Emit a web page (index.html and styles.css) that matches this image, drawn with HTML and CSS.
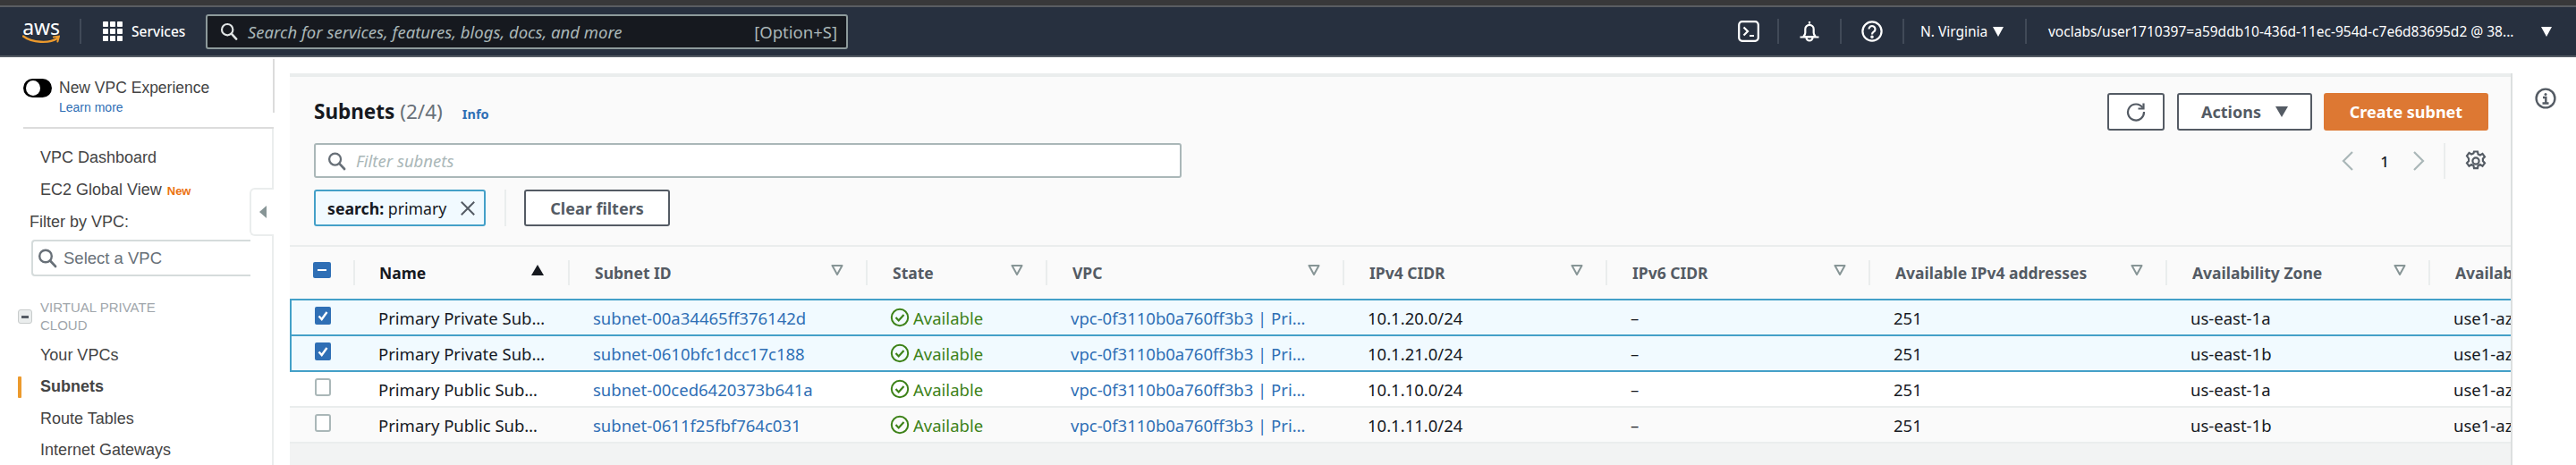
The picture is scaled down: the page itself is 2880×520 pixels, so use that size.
FILE: index.html
```html
<!DOCTYPE html>
<html lang="en">
<head>
<meta charset="utf-8">
<title>Subnets | VPC Console</title>
<link rel="stylesheet" href="styles.css">
</head>
<body>
<svg class="defs" width="0" height="0" aria-hidden="true">
  <symbol id="funnel" viewBox="0 0 14 12"><path d="M1.500 1h11L7 11z" fill="none" stroke="#879596" stroke-width="2" stroke-linejoin="round"/></symbol>
  <symbol id="ok" viewBox="0 0 22 22"><circle cx="11" cy="11" r="9.200" fill="none" stroke="#3d8218" stroke-width="2"/><path d="M6.500 11l3.200 3.400 5.800-6.400" fill="none" stroke="#3d8218" stroke-width="2.200"/></symbol>
  <symbol id="tick" viewBox="0 0 18 20"><rect width="18" height="20" rx="2" fill="#2f6fb5"/><path d="M4.500 10.500l3.200 3.500 5.800-8" fill="none" stroke="#fff" stroke-width="2.400"/></symbol>
  <symbol id="lens" viewBox="0 0 22 22"><circle cx="9" cy="9" r="6.800" fill="none" stroke="currentColor" stroke-width="2.400"/><path d="M14 14l6 6.400" stroke="currentColor" stroke-width="2.800" stroke-linecap="round"/></symbol>
</svg>

<div class="os-strip"></div>
<header class="nav">
  <div class="aws-logo">
    <span class="aws-word">aws</span>
    <svg class="aws-smile" viewBox="0 0 42 11"><path d="M1 1.500C11 9 30 10 39 4" fill="none" stroke="#ec9a2d" stroke-width="2.400" stroke-linecap="round"/><path d="M35 2.600l6-1-1.600 6" fill="none" stroke="#ec9a2d" stroke-width="2" stroke-linecap="round"/></svg>
  </div>
  <span class="nav-sep sep-logo"></span>
  <svg class="grid-icon" viewBox="0 0 22 22" fill="#fff"><rect width="6" height="6" rx=".8"/><rect x="8" width="6" height="6" rx=".8"/><rect x="16" width="6" height="6" rx=".8"/><rect y="8" width="6" height="6" rx=".8"/><rect x="8" y="8" width="6" height="6" rx=".8"/><rect x="16" y="8" width="6" height="6" rx=".8"/><rect y="16" width="6" height="6" rx=".8"/><rect x="8" y="16" width="6" height="6" rx=".8"/><rect x="16" y="16" width="6" height="6" rx=".8"/></svg>
  <span class="nav-services">Services</span>
  <div class="nav-search">
    <svg class="nav-lens"><use href="#lens"/></svg>
    <span class="nav-placeholder">Search for services, features, blogs, docs, and more</span>
    <span class="nav-shortcut">[Option+S]</span>
  </div>
  <svg class="nav-icon icon-term" viewBox="0 0 24 24" fill="none" stroke="#fff" stroke-width="2.200"><rect x="1.200" y="1.200" width="21.600" height="21.600" rx="3.500"/><path d="M6.500 7.500l4.500 4.500-4.500 4.500M13 17h5"/></svg>
  <span class="nav-sep sep-a"></span>
  <svg class="nav-icon icon-bell" viewBox="0 0 24 24" fill="none" stroke="#fff" stroke-width="2.200"><path d="M12 1v2.500M5.500 18c0-1 1.800-2 1.800-4.500V9.500a4.700 4.700 0 0 1 9.400 0v4c0 2.500 1.800 3.500 1.800 4.500z"/><path d="M1.500 18.500h21M8.500 19a3.500 3.500 0 0 0 7 0"/></svg>
  <span class="nav-sep sep-b"></span>
  <svg class="nav-icon icon-help" viewBox="0 0 24 24" fill="none" stroke="#fff" stroke-width="2.200"><circle cx="12" cy="12" r="10.600"/><path d="M8.500 9.500a3.500 3.500 0 1 1 5.500 2.900c-1.300.9-2 1.400-2 3"/><circle cx="12" cy="18.300" r=".7" fill="#fff"/></svg>
  <span class="nav-sep sep-c"></span>
  <span class="nav-region">N. Virginia</span>
  <span class="caret-white caret-region"></span>
  <span class="nav-sep sep-d"></span>
  <span class="nav-user">voclabs/user1710397=a59ddb10-436d-11ec-954d-c7e6d83695d2 @ 38...</span>
  <span class="caret-white caret-user"></span>
</header>

<div class="shell">
  <aside class="sidebar">
    <div class="exp">
      <div class="exp-row"><span class="toggle"><span class="toggle-knob"></span></span><span class="exp-title">New VPC Experience</span></div>
      <a class="exp-link">Learn more</a>
    </div>
    <nav class="side-nav">
      <a class="side-item">VPC Dashboard</a>
      <a class="side-item">EC2 Global View <span class="new-tag">New</span></a>
      <div class="filter-label">Filter by VPC:</div>
      <div class="vpc-select">
        <svg class="vpc-lens"><use href="#lens"/></svg>
        <span>Select a VPC</span>
      </div>
      <div class="group-head">
        <span class="minus-box"></span>
        <span class="group-title">VIRTUAL PRIVATE<br>CLOUD</span>
      </div>
      <a class="side-item tight">Your VPCs</a>
      <a class="side-item tight active">Subnets</a>
      <a class="side-item tight">Route Tables</a>
      <a class="side-item tight">Internet Gateways</a>
    </nav>
    <div class="collapse-tab"><span class="collapse-caret"></span></div>
  </aside>

  <main class="content">
    <section class="panel">
      <div class="title-row">
        <h1 class="title">Subnets <span class="count">(2/4)</span></h1>
        <a class="info">Info</a>
        <div class="actions">
          <button class="btn btn-refresh"><svg viewBox="0 0 22 22" width="22" height="22" fill="none" stroke="#545b64" stroke-width="2.200"><path d="M18.500 6.500A9 9 0 1 0 20 11"/><path d="M19.500 1.500v6h-6"/></svg></button>
          <button class="btn btn-actions">Actions<span class="caret-gray"></span></button>
          <button class="btn btn-primary">Create subnet</button>
        </div>
      </div>
      <div class="filter-row">
        <div class="filter-input">
          <svg class="filter-lens"><use href="#lens"/></svg>
          <span>Filter subnets</span>
        </div>
        <div class="pager">
          <svg class="chev chev-left" viewBox="0 0 14 24" fill="none" stroke="#aab7b8" stroke-width="2.200"><path d="M12 2L2 12l10 10"/></svg>
          <span class="page-no">1</span>
          <svg class="chev chev-right" viewBox="0 0 14 24" fill="none" stroke="#aab7b8" stroke-width="2.200"><path d="M2 2l10 10L2 22"/></svg>
          <span class="pager-sep"></span>
          <svg class="gear" viewBox="0 0 24 24" fill="none" stroke="#545b64" stroke-width="2.200"><circle cx="12" cy="12" r="3.600"/><path d="M10 1.500h4l.6 3 2.300 1 2.600-1.600 2.500 3.400-2.100 2.200v2.600l2.100 2.200-2.500 3.400-2.600-1.600-2.300 1-.6 3h-4l-.6-3-2.300-1-2.600 1.600-2.500-3.400 2.100-2.200v-2.600L2 6.300l2.500-3.400 2.600 1.600 2.300-1z"/></svg>
        </div>
      </div>
      <div class="token-row">
        <div class="token"><span><b>search:</b> primary</span>
          <svg class="token-x" viewBox="0 0 20 20" fill="none" stroke="#545b64" stroke-width="2.200"><path d="M2 2l16 16M18 2L2 18"/></svg>
        </div>
        <span class="token-sep"></span>
        <button class="btn btn-clear">Clear filters</button>
      </div>
    </section>

    <section class="table">
      <div class="t-head">
        <div class="th th-check"><span class="check-mixed"></span></div>
        <div class="th th-name">Name<span class="sort-up"></span></div>
        <div class="th">Subnet ID<svg class="funnel"><use href="#funnel"/></svg></div>
        <div class="th">State<svg class="funnel"><use href="#funnel"/></svg></div>
        <div class="th">VPC<svg class="funnel"><use href="#funnel"/></svg></div>
        <div class="th">IPv4 CIDR<svg class="funnel"><use href="#funnel"/></svg></div>
        <div class="th">IPv6 CIDR<svg class="funnel"><use href="#funnel"/></svg></div>
        <div class="th">Available IPv4 addresses<svg class="funnel"><use href="#funnel"/></svg></div>
        <div class="th">Availability Zone<svg class="funnel"><use href="#funnel"/></svg></div>
        <div class="th th-last">Availability Zone ID</div>
      </div>

      <div class="t-row selected first-sel">
        <div class="td td-check"><svg class="tick"><use href="#tick"/></svg></div>
        <div class="td">Primary Private Sub…</div>
        <div class="td link">subnet-00a34465ff376142d</div>
        <div class="td state"><svg class="ok"><use href="#ok"/></svg>Available</div>
        <div class="td link">vpc-0f3110b0a760ff3b3 | Pri…</div>
        <div class="td">10.1.20.0/24</div>
        <div class="td">–</div>
        <div class="td">251</div>
        <div class="td">us-east-1a</div>
        <div class="td">use1-az1</div>
      </div>
      <div class="t-row selected">
        <div class="td td-check"><svg class="tick"><use href="#tick"/></svg></div>
        <div class="td">Primary Private Sub…</div>
        <div class="td link">subnet-0610bfc1dcc17c188</div>
        <div class="td state"><svg class="ok"><use href="#ok"/></svg>Available</div>
        <div class="td link">vpc-0f3110b0a760ff3b3 | Pri…</div>
        <div class="td">10.1.21.0/24</div>
        <div class="td">–</div>
        <div class="td">251</div>
        <div class="td">us-east-1b</div>
        <div class="td">use1-az2</div>
      </div>
      <div class="t-row">
        <div class="td td-check"><span class="box"></span></div>
        <div class="td">Primary Public Sub…</div>
        <div class="td link">subnet-00ced6420373b641a</div>
        <div class="td state"><svg class="ok"><use href="#ok"/></svg>Available</div>
        <div class="td link">vpc-0f3110b0a760ff3b3 | Pri…</div>
        <div class="td">10.1.10.0/24</div>
        <div class="td">–</div>
        <div class="td">251</div>
        <div class="td">us-east-1a</div>
        <div class="td">use1-az1</div>
      </div>
      <div class="t-row alt">
        <div class="td td-check"><span class="box"></span></div>
        <div class="td">Primary Public Sub…</div>
        <div class="td link">subnet-0611f25fbf764c031</div>
        <div class="td state"><svg class="ok"><use href="#ok"/></svg>Available</div>
        <div class="td link">vpc-0f3110b0a760ff3b3 | Pri…</div>
        <div class="td">10.1.11.0/24</div>
        <div class="td">–</div>
        <div class="td">251</div>
        <div class="td">us-east-1b</div>
        <div class="td">use1-az2</div>
      </div>
    </section>
  </main>

  <aside class="help-rail">
    <svg class="rail-info" viewBox="0 0 24 24" fill="none" stroke="#545b64" stroke-width="2.400"><circle cx="12" cy="12" r="10.400"/><circle cx="12" cy="7.500" r="1.500" fill="#545b64" stroke="none"/><path d="M9 11h3.300v6M8.500 17.500h7"/></svg>
  </aside>
</div>
</body>
</html>
```
FILE: styles.css
```css
* { box-sizing: border-box; }
html, body { margin: 0; padding: 0; }
body {
  width: 2880px;
  height: 520px;
  overflow: hidden;
  background: #fff;
  font-family: "Noto Sans", "Open Sans", sans-serif;
  color: #16191f;
}
.defs { position: absolute; }

.os-strip { height: 8px; background: #38383a; border-bottom: 2px solid #5a5d62; }

/* Top navigation */
.nav {
  height: 56px;
  background: #27303f;
  border-bottom: 2px solid #545b64;
  display: flex;
  align-items: center;
  color: #fff;
}
.aws-logo { width: 42px; height: 30px; margin-left: 25px; display: flex; flex-direction: column; align-items: center; }
.aws-word { font-size: 23px; line-height: 21px; height: 19px; color: #fff; letter-spacing: -.2px; }
.aws-smile { width: 42px; height: 11px; display: block; }
.nav-sep { width: 2px; height: 28px; background: #414a58; flex: none; }
.sep-logo { margin-left: 22px; }
.grid-icon { width: 22px; height: 22px; margin-left: 24px; }
.nav-services { font-size: 15.500px; font-weight: 500; margin-left: 10px; width: 83px; }
.nav-search {
  width: 718px;
  height: 39px;
  background: #16191f;
  border: 2px solid #8d9a9b;
  border-radius: 3px;
  display: flex;
  align-items: center;
  color: #aab7b8;
}
.nav-lens { width: 20px; height: 20px; margin-left: 14px; color: #e0e4e4; }
.nav-placeholder { font-style: italic; font-size: 18.500px; margin-left: 11px; white-space: nowrap; }
.nav-shortcut { margin-left: auto; margin-right: 10px; font-size: 18.500px; }
.nav-icon { width: 24px; height: 24px; flex: none; }
.icon-term { margin-left: 995px; }
.sep-a { margin-left: 20px; }
.icon-bell { margin-left: 22px; }
.sep-b { margin-left: 22px; }
.icon-help { margin-left: 22px; }
.sep-c { margin-left: 22px; }
.nav-region { font-size: 15.500px; margin-left: 18px; width: 81px; white-space: nowrap; }
.caret-white { width: 0; height: 0; border-left: 6px solid transparent; border-right: 6px solid transparent; border-top: 11px solid #fff; flex: none; }
.caret-region { margin-left: 0; }
.sep-d { margin-left: 24px; }
.nav-user { font-size: 15.500px; margin-left: 24px; width: 551px; white-space: nowrap; }
.caret-user { margin-left: 0; }

/* Layout */
.shell { display: flex; height: 456px; }

/* Sidebar */
.sidebar { width: 324px; flex: none; padding: 20px 0 0 0; position: relative; overflow: hidden; }
.exp { margin-left: 26px; width: 280px; height: 60px; border-bottom: 2px solid #dcdcdc; padding-top: 4px; }
.exp-row { display: flex; align-items: center; height: 21px; }
.toggle { width: 32px; height: 21px; background: #000; border-radius: 11px; display: flex; align-items: center; padding-left: 3px; }
.toggle-knob { width: 16px; height: 17px; border-radius: 50%; background: #fff; }
.exp-title { font-family: "Liberation Sans", Arial, sans-serif; font-size: 17.500px; color: #444; margin-left: 8px; }
.exp-link { display: block; font-family: "Liberation Sans", Arial, sans-serif; font-size: 14px; color: #2f6fb5; margin: 3px 0 0 40px; }
.side-nav { font-family: "Liberation Sans", Arial, sans-serif; font-size: 18px; color: #444; padding-top: 14px; height: 380px; border-right: 2px solid #eaeded; width: 306px; }
.sidebar::after { content: ""; position: absolute; left: 305px; top: 2px; width: 2px; height: 60px; background: #dcdcdc; }
.side-item { display: flex; align-items: center; height: 36px; padding-left: 45px; }
.side-item.tight { height: 35.300px; }
.new-tag { color: #ec7211; font-size: 13px; font-weight: 700; margin-left: 6px; margin-top: 3px; }
.filter-label { height: 36px; line-height: 36px; padding-left: 33px; }
.vpc-select {
  margin: 2px 0 0 35px;
  width: 245px;
  height: 41px;
  border: 2px solid #d5dbdb;
  border-right: 0;
  border-radius: 4px 0 0 4px;
  display: flex;
  align-items: center;
  color: #687078;
  font-size: 18.500px;
}
.vpc-lens { width: 22px; height: 25px; margin-left: 5px; margin-right: 7px; color: #687078; }
.group-head { display: flex; margin-top: 25px; height: 46px; }
.minus-box { width: 16px; height: 16px; margin: 12px 9px 0 20px; border-radius: 3px; border: 1px solid #c8cccc; background: #eaeded; position: relative; }
.minus-box::after { content: ""; position: absolute; left: 3px; top: 6px; width: 8px; height: 3px; background: #545b64; }
.group-title { font-size: 15px; line-height: 20px; color: #a0a6ab; }
.side-item.active { font-weight: 700; position: relative; }
.side-item.active::before { content: ""; position: absolute; left: 20px; top: 6px; width: 4px; height: 24px; background: #ec9a2d; border-radius: 1px; }
.collapse-tab { position: absolute; left: 279px; top: 146px; width: 27px; height: 54px; background: #fff; border: 2px solid #eaeded; border-right: 0; border-radius: 6px 0 0 6px; display: flex; align-items: center; justify-content: center; }
.collapse-caret { width: 0; height: 0; border-top: 7px solid transparent; border-bottom: 7px solid transparent; border-right: 8px solid #879596; }

/* Content */
.content { width: 2483px; flex: none; margin-top: 18px; background: #f2f3f3; border-top: 4px solid #eaeded; overflow: hidden; }
.panel { height: 188px; background: #fafafa; padding: 18px 25px 0 27px; }
.title-row { display: flex; align-items: center; height: 42px; }
.title { font-size: 22.500px; font-weight: 700; margin: 0; line-height: 42px; }
.count { font-weight: 400; color: #687078; }
.info { color: #2f6fb5; font-size: 14.500px; font-weight: 700; margin-left: 22px; margin-top: 4px; }
.actions { margin-left: auto; display: flex; gap: 14px; }
.btn {
  font-family: inherit;
  height: 42px;
  font-size: 18px;
  font-weight: 700;
  border: 2px solid #545b64;
  border-radius: 3px;
  background: #fff;
  color: #545b64;
  display: flex;
  align-items: center;
  justify-content: center;
  padding: 0;
}
.btn-refresh { width: 64px; }
.btn-actions { width: 151px; }
.btn-primary { width: 184px; margin-left: -1px; background: #dd7833; border-color: #dd7833; color: #fff; }
.caret-gray { width: 0; height: 0; border-left: 7.500px solid transparent; border-right: 7.500px solid transparent; border-top: 12px solid #545b64; margin-left: 16px; }
.filter-row { display: flex; margin-top: 14px; height: 40px; }
.filter-input {
  width: 970px;
  height: 39px;
  background: #fff;
  border: 2px solid #aab7b8;
  border-radius: 3px;
  display: flex;
  align-items: center;
  color: #aab7b8;
  font-style: italic;
  font-size: 18.500px;
}
.filter-lens { width: 21px; height: 22px; margin-left: 13px; margin-right: 11px; color: #687078; }
.pager { margin-left: auto; display: flex; align-items: center; }
.chev { width: 14px; height: 24px; }
.page-no { width: 26px; margin-left: 21px; text-align: center; font-size: 17px; font-weight: 500; color: #16191f; }
.chev-right { margin-left: 18px; }
.pager-sep { width: 2px; height: 40px; background: #eaeded; margin-left: 21px; }
.gear { width: 24px; height: 24px; margin: 0 2px 0 22px; }
.token-row { display: flex; align-items: center; margin-top: 12px; height: 41px; }
.token { width: 192px; height: 41px; background: #f1faff; border: 2px solid #44a0c8; border-radius: 3px; display: flex; align-items: center; padding-left: 13px; font-size: 17.700px; color: #16191f; white-space: nowrap; }
.token b { font-weight: 700; }
.token-x { width: 18px; height: 18px; margin-left: auto; margin-right: 9px; }
.token-sep { width: 2px; height: 41px; background: #eaeded; margin: 0 20px 0 21px; }
.btn.btn-clear { width: 163px; height: 41px; }

/* Table */
.table { border-top: 2px solid #eaeded; }
.t-head, .t-row {
  display: grid;
  grid-template-columns: 73px 240px 333px 201px 332px 294px 294px 332px 294px 300px;
  background: #fafafa;
  width: 2493px;
}
.t-head { height: 60px; align-items: center; border-bottom: 2px solid #eaeded; }
.th {
  height: 28px;
  display: flex;
  align-items: center;
  padding: 0 25px 0 28px;
  border-right: 2px solid #eaeded;
  font-size: 17.500px;
  font-weight: 700;
  color: #545b64;
  white-space: nowrap;
}
.th-check { padding: 0 0 0 26px; }
.th-name { color: #16191f; padding-left: 27px; }
.th-last { border-right: 0; }
.funnel { width: 14px; height: 12px; margin-left: auto; margin-top: -6px; }
.sort-up { width: 0; height: 0; margin-left: auto; margin-right: 2px; margin-top: -6px; border-left: 7px solid transparent; border-right: 7px solid transparent; border-bottom: 12px solid #16191f; }
.check-mixed { width: 20px; height: 18px; margin-top: -6px; border-radius: 2px; background: #2f6fb5; position: relative; }
.check-mixed::after { content: ""; position: absolute; left: 5px; top: 8px; width: 10px; height: 2px; background: #fff; }

.t-row { height: 40px; align-items: center; border-bottom: 2px solid #eaeded; background: #fff; }
.t-row.alt { background: #fafafa; }
.t-row.selected { background: #f1faff; border-bottom: 2px solid #44a0c8; border-left: 2px solid #44a0c8; grid-template-columns: 71px 240px 333px 201px 332px 294px 294px 332px 294px 300px; }
.t-row.first-sel { border-top: 2px solid #44a0c8; margin-top: -2px; height: 42px; }
.td { padding-left: 26px; font-size: 18.500px; white-space: nowrap; color: #16191f; }
.td-check { padding-left: 28px; height: 20px; display: flex; margin-top: -4px; }
.t-row.selected .td-check { padding-left: 26px; }
.tick { width: 18px; height: 20px; }
.box { width: 18px; height: 20px; border: 2px solid #aab7b8; border-radius: 3px; background: #fff; }
.link { color: #2f6fb5; }
.state { color: #3d8218; display: flex; align-items: center; padding-left: 25px; }
.ok { width: 22px; height: 22px; margin-right: 4px; }

/* Right rail */
.help-rail { width: 73px; flex: none; margin-top: 18px; border-left: 2px solid #dcdfdf; display: flex; justify-content: center; padding-top: 16px; }
.rail-info { width: 24px; height: 24px; margin-left: 3px; }
```
